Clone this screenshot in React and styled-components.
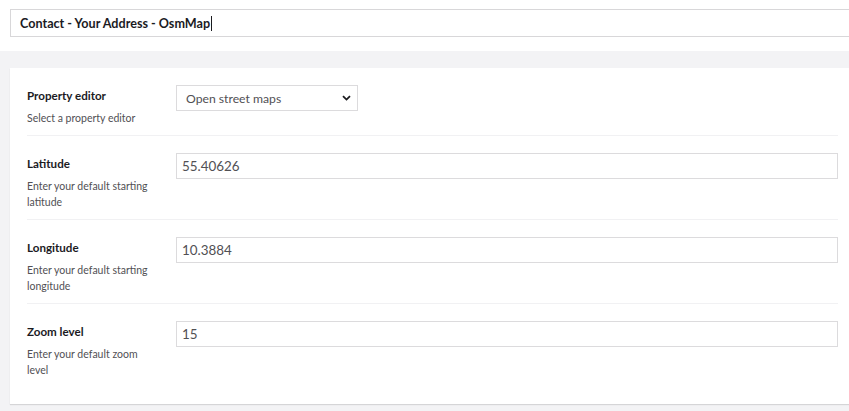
import React from 'react';
import styled, { createGlobalStyle } from 'styled-components';

const GlobalStyle = createGlobalStyle`
    html, body {
        margin: 0;
        padding: 0;
        background: #f3f3f5;
        overflow: hidden;
        font-family: Lato, "Open Sans", sans-serif;
    }
`;

export const Page = styled.div`
    width: 872px;
    min-height: 411px;
    background: #f3f3f5;
`;

export const Header = styled.div`
    background: #ffffff;
    padding: 9px 0 14px 10px;
`;

export const NameInput = styled.div`
    height: 26px;
    border: 1px solid #d8d7d9;
    border-right: 0;
    display: flex;
    align-items: center;
    padding-left: 9px;
    font-size: 12.6px;
    font-weight: 700;
    color: #1b1b1f;
`;

export const Caret = styled.span`
    display: inline-block;
    width: 1px;
    height: 15px;
    background: #1b1b1f;
    margin-left: 1px;
`;

export const Panel = styled.div`
    margin: 17px 0 0 10px;
    background: #ffffff;
    box-shadow: 0 1px 1px rgba(0, 0, 0, 0.12);
    padding: 0 34px 0 17px;
`;

export const Row = styled.div`
    display: grid;
    grid-template-columns: 149px 1fr;
    height: ${(p) => p.$h}px;
    box-sizing: border-box;
    padding-top: 17px;
    border-bottom: ${(p) => (p.$last ? '0' : '1px solid #f1f1f3')};
`;

export const LabelCol = styled.div`
    display: flex;
    flex-direction: column;
    padding-top: 3px;
`;

export const Label = styled.div`
    font-size: 11.6px;
    font-weight: 700;
    line-height: 16px;
    color: #1b1b1f;
`;

export const Desc = styled.div`
    margin-top: 6px;
    font-size: 10.5px;
    line-height: 16px;
    color: #515054;
    width: 128px;
`;

export const TextInput = styled.div`
    height: 26px;
    box-sizing: border-box;
    border: 1px solid #dcdbdd;
    display: flex;
    align-items: center;
    padding-left: 5px;
    font-size: 13.4px;
    color: #515054;
`;

export const Select = styled(TextInput)`
    width: 182px;
    justify-content: space-between;
    padding: 0 6px 0 9px;
    font-size: 12.2px;
`;

const Chevron = () => (
    <svg width="9" height="6" viewBox="0 0 9 6">
        <path d="M1 1.2 L4.5 4.6 L8 1.2" fill="none" stroke="#1b1b1f" strokeWidth="1.8" />
    </svg>
);

const fields = [
    { label: 'Latitude', desc: 'Enter your default starting latitude', value: '55.40626' },
    { label: 'Longitude', desc: 'Enter your default starting longitude', value: '10.3884' },
    { label: 'Zoom level', desc: 'Enter your default zoom level', value: '15', last: true },
];

export default function App() {
    return (
        <Page>
            <GlobalStyle />
            <Header>
                <NameInput>
                    Contact - Your Address - OsmMap<Caret />
                </NameInput>
            </Header>
            <Panel>
                <Row $h={68}>
                    <LabelCol>
                        <Label>Property editor</Label>
                        <Desc>Select a property editor</Desc>
                    </LabelCol>
                    <div>
                        <Select>
                            Open street maps
                            <Chevron />
                        </Select>
                    </div>
                </Row>
                {fields.map((f) => (
                    <Row key={f.label} $h={f.last ? 100 : 84} $last={f.last}>
                        <LabelCol>
                            <Label>{f.label}</Label>
                            <Desc>{f.desc}</Desc>
                        </LabelCol>
                        <div>
                            <TextInput>{f.value}</TextInput>
                        </div>
                    </Row>
                ))}
            </Panel>
        </Page>
    );
}
